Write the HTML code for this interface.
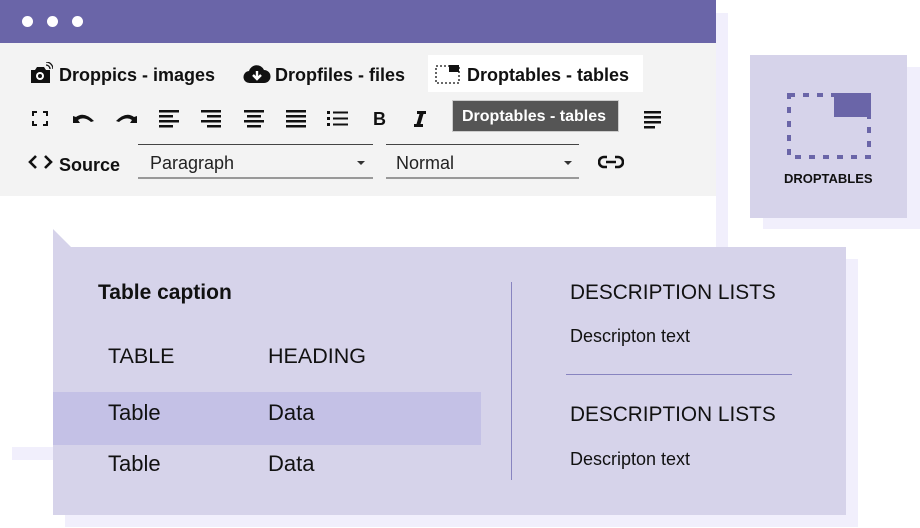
<!DOCTYPE html>
<html><head><meta charset="utf-8"><style>
*{margin:0;padding:0;box-sizing:border-box}
body{width:920px;height:528px;background:#fff;position:relative;overflow:hidden;font-family:"Liberation Sans",Arial,sans-serif;color:#111}
.a{position:absolute}
.t{position:absolute;white-space:nowrap}
.b{font-weight:bold}
</style></head><body>
<div class="a" style="left:12px;top:13px;width:716px;height:447px;background:#f1effc"></div>
<div class="a" style="left:0;top:0;width:716px;height:447px;background:#fff"></div>
<div class="a" style="left:0;top:0;width:716px;height:43px;background:#6a65a8"></div>
<div class="a" style="left:22px;top:16px;width:11px;height:11px;border-radius:50%;background:#fff"></div>
<div class="a" style="left:47px;top:16px;width:11px;height:11px;border-radius:50%;background:#fff"></div>
<div class="a" style="left:72px;top:16px;width:11px;height:11px;border-radius:50%;background:#fff"></div>
<div class="a" style="left:0;top:43px;width:716px;height:153px;background:#f3f3f3"></div>

<!-- row 1 -->
<svg class="a" style="left:28px;top:62px" width="25" height="24" viewBox="0 0 25 24"><path d="M3 8h4l2-3h7l2 3h4v13H3z" fill="#111"/><circle cx="12" cy="14" r="4" fill="#fff"/><circle cx="12" cy="14" r="2" fill="#111"/><path d="M18 3a4 4 0 0 1 4 4M18 0a7 7 0 0 1 7 7" stroke="#111" stroke-width="1.3" fill="none"/></svg>
<div class="t b" style="left:59px;top:65px;font-size:18px">Droppics - images</div>
<svg class="a" style="left:243px;top:63px" width="28" height="22" viewBox="0 0 28 22"><path d="M7 20a6 6 0 0 1-1-12 8 8 0 0 1 15-1 6.5 6.5 0 0 1 0 13z" fill="#111"/><path d="M14 8v7M10 12l4 4 4-4" stroke="#fff" stroke-width="2.4" fill="none"/></svg>
<div class="t b" style="left:275px;top:65px;font-size:18px">Dropfiles - files</div>
<div class="a" style="left:428px;top:55px;width:215px;height:37px;background:#fff"></div>
<svg class="a" style="left:435px;top:63px" width="26" height="22" viewBox="0 0 26 22"><rect x="1" y="3" width="23" height="17" fill="none" stroke="#111" stroke-width="1.3" stroke-dasharray="2 2"/><rect x="14" y="2" width="10" height="7" fill="#111"/></svg>
<div class="t b" style="left:467px;top:65px;font-size:18px">Droptables - tables</div>

<!-- row 2 icons -->
<svg class="a" style="left:30px;top:108px" width="640" height="22" viewBox="0 0 640 22">
<g fill="#111">
<path d="M2 3h5v2H4v3H2zM13 3h5v5h-2V5h-3zM2 13h2v3h3v2H2zM16 13h2v5h-5v-2h3z"/>
<path d="M46 9q8-6 18 4l-3 1q-7-6-13-2l2 3h-7V8z"/>
<path d="M104 9q-8-6-18 4l3 1q7-6 13-2l-2 3h7V8z"/>
<path d="M129 2h20v2.5h-20zM129 7h14v2.5h-14zM129 12h20v2.5h-20zM129 17h14v2.5h-14z"/>
<path d="M171 2h20v2.5h-20zM177 7h14v2.5h-14zM171 12h20v2.5h-20zM177 17h14v2.5h-14z"/>
<path d="M214 2h20v2.5h-20zM217 7h14v2.5h-14zM214 12h20v2.5h-20zM217 17h14v2.5h-14z"/>
<path d="M256 2h20v2.5h-20zM256 7h20v2.5h-20zM256 12h20v2.5h-20zM256 17h20v2.5h-20z"/>
<path d="M297 3h3v3h-3zM297 9h3v3h-3zM297 15h3v3h-3zM303 3.5h15v2h-15zM303 9.5h15v2h-15zM303 15.5h15v2h-15z"/>
<path d="M614 3h17v2.5h-17zM614 8h17v2.5h-17zM614 13h17v2.5h-17zM614 18h11v2.5h-11z"/>
<path d="M387 3h9v3h-2.5l-3 10h2.5v3h-9v-3h2.5l3-10h-2.5z"/>
</g>
<text x="343" y="17" font-family="Liberation Sans" font-weight="bold" font-size="18" fill="#111">B</text>
</svg>
<div class="a" style="left:452px;top:100px;width:167px;height:32px;background:#555;border:1px solid #ccc"></div>
<div class="t b" style="left:462px;top:108px;font-size:16px;color:#fff">Droptables - tables</div>

<!-- row 3 -->
<svg class="a" style="left:28px;top:154px" width="26" height="16" viewBox="0 0 26 16"><path d="M8 2L2 8l6 6M17 2l6 6-6 6" stroke="#111" stroke-width="2.6" fill="none"/></svg>
<div class="t b" style="left:59px;top:155px;font-size:18px">Source</div>
<div class="a" style="left:138px;top:144px;width:235px;height:35px;border-top:1px solid #444;border-bottom:2px solid #999"></div>
<div class="t" style="left:150px;top:153px;font-size:18px;color:#222">Paragraph</div>
<div class="a" style="left:357px;top:161px;border:4px solid transparent;border-top:4px solid #333"></div>
<div class="a" style="left:386px;top:144px;width:193px;height:35px;border-top:1px solid #444;border-bottom:2px solid #999"></div>
<div class="t" style="left:396px;top:153px;font-size:18px;color:#222">Normal</div>
<div class="a" style="left:564px;top:161px;border:4px solid transparent;border-top:4px solid #333"></div>
<svg class="a" style="left:598px;top:154px" width="26" height="16" viewBox="0 0 26 16"><path d="M9 3H6a5 5 0 0 0 0 10h3M17 3h3a5 5 0 0 1 0 10h-3M8 8h10" stroke="#111" stroke-width="2.6" fill="none"/></svg>

<!-- droptables card -->
<div class="a" style="left:763px;top:67px;width:157px;height:162px;background:#f1effc"></div>
<div class="a" style="left:750px;top:55px;width:157px;height:163px;background:#d6d3ea"></div>
<svg class="a" style="left:786px;top:92px" width="86" height="68" viewBox="0 0 86 68"><rect x="3" y="3" width="80" height="62" fill="none" stroke="#6a65a8" stroke-width="4" stroke-dasharray="6 8"/><rect x="48" y="1" width="37" height="24" fill="#6a65a8"/></svg>
<div class="t b" style="left:784px;top:171px;font-size:13px;color:#111">DROPTABLES</div>

<!-- main panel -->
<div class="a" style="left:65px;top:259px;width:793px;height:268px;background:#f1effc"></div>
<div class="a" style="left:53px;top:247px;width:793px;height:268px;background:#d6d3ea"></div>
<svg class="a" style="left:53px;top:229px" width="19" height="19"><path d="M0 0L19 19H0z" fill="#d6d3ea"/></svg>
<div class="a" style="left:53px;top:392px;width:428px;height:53px;background:#c4c1e6"></div>
<div class="t b" style="left:98px;top:281px;font-size:21px">Table caption</div>
<div class="t" style="left:108px;top:344px;font-size:21.5px">TABLE</div>
<div class="t" style="left:268px;top:344px;font-size:21.5px">HEADING</div>
<div class="t" style="left:108px;top:400px;font-size:22px">Table</div>
<div class="t" style="left:268px;top:400px;font-size:22px">Data</div>
<div class="t" style="left:108px;top:451px;font-size:22px">Table</div>
<div class="t" style="left:268px;top:451px;font-size:22px">Data</div>
<div class="a" style="left:511px;top:282px;width:1px;height:198px;background:#8884c0"></div>
<div class="t" style="left:570px;top:281px;font-size:20.8px">DESCRIPTION LISTS</div>
<div class="t" style="left:570px;top:326px;font-size:18px">Descripton text</div>
<div class="a" style="left:566px;top:374px;width:226px;height:1px;background:#8884c0"></div>
<div class="t" style="left:570px;top:403px;font-size:20.8px">DESCRIPTION LISTS</div>
<div class="t" style="left:570px;top:449px;font-size:18px">Descripton text</div>
</body></html>
